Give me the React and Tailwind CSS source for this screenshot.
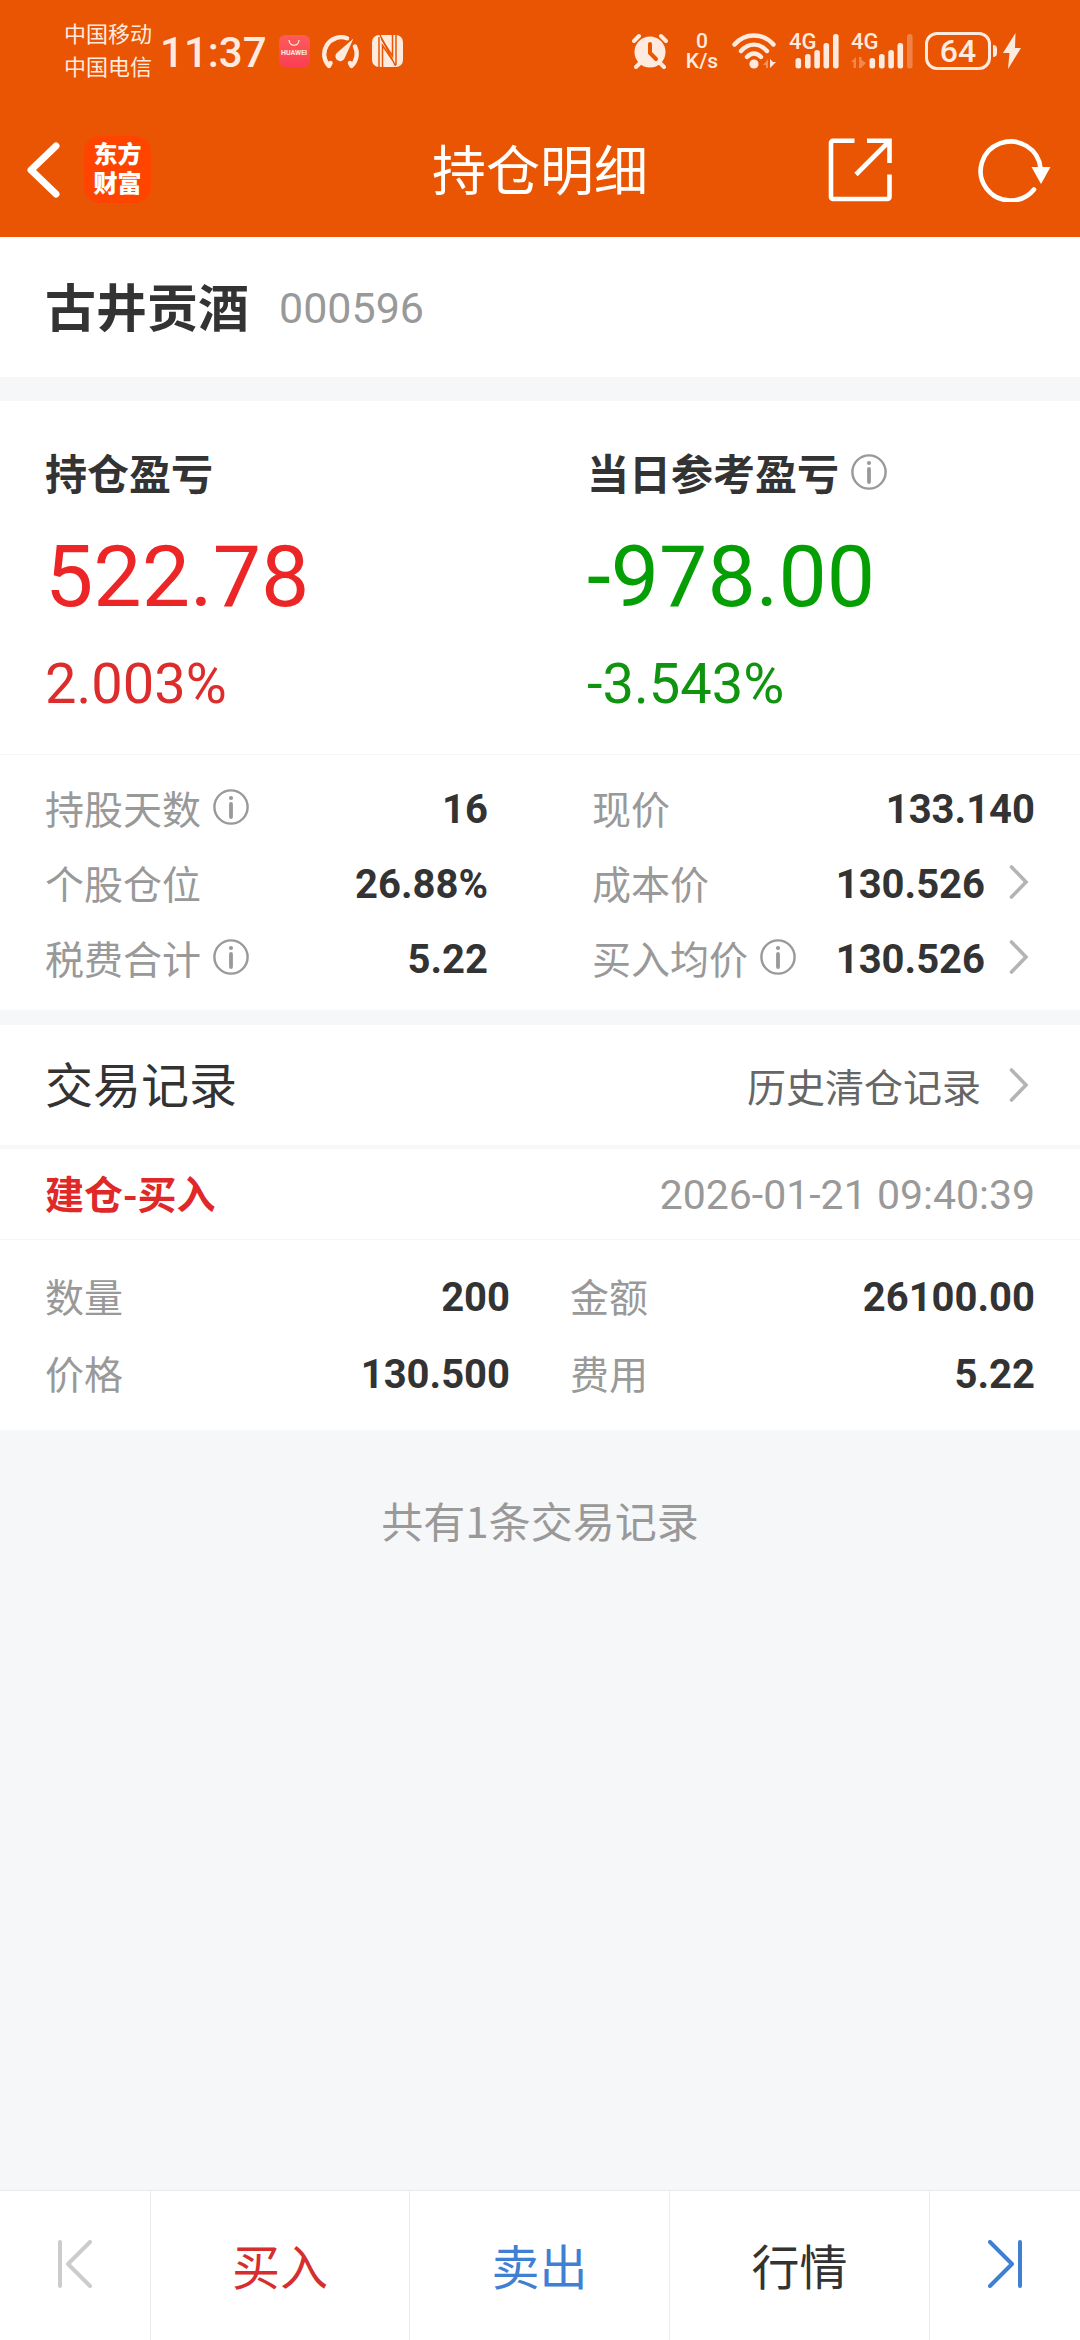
function InfoButton({ label }) {
  return (
    <button type="button" aria-label={`${label}说明`} className="shrink-0">
      <svg className="size-9" viewBox="0 0 36 36" fill="none" stroke="#999999" strokeWidth="2.4">
        <circle cx="18" cy="18" r="16.6" />
        <circle cx="18" cy="9" r="2.1" fill="#999999" stroke="none" />
        <path d="M18 15v13" strokeWidth="3.8" strokeLinecap="round" />
      </svg>
    </button>
  );
}

function Chevron() {
  return (
    <svg className="h-9 w-5 shrink-0" viewBox="0 0 20 36" fill="none" stroke="#b4b4b4" strokeWidth="3.6" strokeLinecap="round">
      <path d="M2.5 3 17 18 2.5 33" />
    </svg>
  );
}

function Signal({ weak }) {
  return (
    <div className={weak ? "relative h-9 w-[62px]" : "relative h-9 w-[50px]"}>
      <span className="absolute top-0 left-0 text-[22px] leading-[18px] font-medium">4G</span>
      <svg className="size-full" viewBox={weak ? "0 0 62 36" : "0 0 50 36"} fill="currentColor">
        {weak && (
          <g opacity="0.35">
            <path d="M0 29 5 24v11H2.5v-6z" />
            <path d="M8 24h2.5v3L15 30l-5 5H8z" />
          </g>
        )}
        <g transform={weak ? "translate(12 0)" : undefined}>
          <rect x="6.500" y="25" width="5.600" height="10.500" rx="2.500" />
          <rect x="16" y="21" width="5.600" height="14.500" rx="2.500" />
          <rect x="25.300" y="17" width="5.600" height="18.500" rx="2.500" />
          <rect x="34.500" y="10" width="5.600" height="25.500" rx="2.500" />
          <rect x="44" y="1" width="5.600" height="34.500" rx="2.500" opacity={weak ? 0.3 : 1} />
        </g>
      </svg>
    </div>
  );
}

function StatusBar() {
  return (
    <div className="flex h-[102px] items-center justify-between pr-[59px] pl-16 font-['Roboto','Noto_Sans_CJK_SC',sans-serif] text-[#ffeadf]">
      <div className="flex items-center">
        <div className="text-[22px] leading-[33px]">
          <p>中国移动</p>
          <p>中国电信</p>
        </div>
        <time className="ml-2 pt-1 text-[42px] leading-[48px] font-medium">11:37</time>
        <div className="ml-3 flex h-8 w-[31px] flex-col items-center rounded-md bg-gradient-to-b from-[#fc5b5b] to-[#fb3d55]">
          <svg className="mt-1 h-2 w-3" viewBox="0 0 12 8" fill="none" stroke="currentColor" strokeWidth="1.200">
            <path d="M1 1c0 7 10 7 10 0" />
          </svg>
          <span className="text-[7px] leading-[12px] font-bold">HUAWEI</span>
        </div>
        <svg className="ml-2.5 h-[35px] w-10" viewBox="0 0 40 35" fill="none" stroke="currentColor" strokeWidth="4.400" strokeLinecap="round" strokeLinejoin="round">
          <path d="M27 4.200A17 17 0 0 0 9 32l1.500-3M35 12.500A17 17 0 0 1 31.500 32L30 29" />
          <path d="M33.500 4.500 24.500 24.500a4.800 4.800 0 1 1-8-5.200z" fill="currentColor" stroke="none" />
        </svg>
        <svg className="ml-3 h-8 w-[31px]" viewBox="0 0 31 32">
          <rect width="31" height="32" rx="7" fill="currentColor" />
          <path d="M7 32V2M24 0v30M8 0 23.500 31" fill="none" stroke="#e95502" strokeWidth="1.500" />
          <path d="M10.500 32V10.500L20.500 25M20.500 0v21L9.500 4" fill="none" stroke="#e95502" strokeWidth="1.500" />
        </svg>
      </div>
      <div className="flex items-center">
        <svg className="size-9" viewBox="0 0 36 36" fill="currentColor">
          <circle cx="18" cy="19" r="15.500" />
          <path d="m8 30-4 4M28 30l4 4M2 8l5-5M34 8l-5-5" stroke="currentColor" strokeWidth="4" strokeLinecap="round" />
          <path d="M18 11v9l6 6" fill="none" stroke="#e95502" strokeWidth="4" strokeLinecap="round" />
        </svg>
        <div className="ml-4 flex w-9 flex-col items-center text-[21px] leading-5 font-medium">
          <span>0</span>
          <span>K/s</span>
        </div>
        <svg className="ml-3 h-9 w-[45px]" viewBox="0 0 45 36" fill="none" stroke="currentColor" strokeWidth="4.400" strokeLinecap="round">
          <path d="M2.500 11.500C13-.5 31-.5 41.500 11.500M9 18c7.500-8.500 18.500-8.500 26 0M15 24c4.500-4.600 9.500-4.600 14 0" />
          <circle cx="22" cy="31" r="4.600" fill="currentColor" stroke="none" />
          <path d="m31 32 5-6v9h-2v-3z" fill="currentColor" stroke="none" opacity="0.400" />
          <path d="M38 26v9l6-6h-3z" fill="currentColor" stroke="none" />
        </svg>
        <div className="ml-3 flex gap-3">
          <Signal />
          <Signal weak />
        </div>
        <div className="ml-3 flex h-[38px] w-[66px] items-center justify-center rounded-xl border-[3px] border-current text-[32px] leading-8 font-medium">
          64
        </div>
        <div className="ml-0.5 h-3 w-1 rounded-r-sm bg-current" />
        <svg className="ml-1.5 h-9 w-[18px]" viewBox="0 0 18 36" fill="currentColor">
          <path d="M12.500 0 0 20h6.500L5 36 18 15h-6z" />
        </svg>
      </div>
    </div>
  );
}

function NavBar() {
  return (
    <div className="grid h-[135px] grid-cols-[1fr_auto_1fr] items-center px-[26px] text-white">
      <div className="flex items-center gap-[22px]">
        <button type="button" aria-label="返回">
          <svg className="h-[58px] w-9" viewBox="0 0 36 58" fill="none" stroke="currentColor" strokeWidth="7" strokeLinecap="round" strokeLinejoin="round">
            <path d="M30 5 5 29l25 24" />
          </svg>
        </button>
        <a href="#home" className="flex size-[67px] flex-col items-center justify-center rounded-2xl bg-[#ff4400] font-['Roboto','Noto_Sans_CJK_SC',sans-serif] text-[24px] leading-[29px] font-black" aria-label="东方财富">
          <span>东方</span>
          <span>财富</span>
        </a>
      </div>
      <h1 className="pb-1 text-[54px] leading-[72px]">持仓明细</h1>
      <div className="flex items-center justify-end gap-[86px] pr-0.5">
        <button type="button" aria-label="分享">
          <svg className="size-16" viewBox="0 0 64 64" fill="none" stroke="currentColor" strokeWidth="4.600">
            <path d="M26.500 2.800H5a2 2 0 0 0-2 2V59a2 2 0 0 0 2 2h54.500a2 2 0 0 0 2-2V36.500" />
            <path d="M39 2.800h22.500V25M61 3.500 28 36.500" />
          </svg>
        </button>
        <button type="button" aria-label="刷新">
          <svg className="h-16 w-[74px]" viewBox="0 0 74 64" fill="none" stroke="currentColor" strokeWidth="4.600">
            <path d="M56 51.500A30 29.500 0 1 1 62.500 30" strokeLinecap="round" />
            <path d="M53.500 29h19L63 46z" fill="currentColor" stroke="none" />
          </svg>
        </button>
      </div>
    </div>
  );
}

function Row({ label, value, info, link }) {
  return (
    <div className="flex h-full items-center justify-between">
      <dt className="flex items-center gap-3 text-[#999999]">
        {label}
        {info && <InfoButton label={label} />}
      </dt>
      <dd className="font-['Roboto',sans-serif] text-[40px] font-bold">
        {link ? (
          <button type="button" className="flex items-center gap-6 pr-1.5">
            <span className="pt-1.5">{value}</span>
            <Chevron />
          </button>
        ) : (
          <span className="block pt-1.5">{value}</span>
        )}
      </dd>
    </div>
  );
}

function Profit({ label, info, amount, rate, amountClass, rateClass }) {
  return (
    <div>
      <h3 className="flex items-center gap-3 text-[42px] leading-[60px] font-bold">
        {label}
        {info && <InfoButton label={label} />}
      </h3>
      <p className={`mt-[27px] font-['Roboto',sans-serif] text-[86px] leading-[96px] ${amountClass}`}>{amount}</p>
      <p className={`mt-[27px] font-['Roboto',sans-serif] text-[56px] leading-[64px] ${rateClass}`}>{rate}</p>
    </div>
  );
}

const stats = [
  { label: "持股天数", value: "16", info: true },
  { label: "现价", value: "133.140" },
  { label: "个股仓位", value: "26.88%" },
  { label: "成本价", value: "130.526", link: true },
  { label: "税费合计", value: "5.22", info: true },
  { label: "买入均价", value: "130.526", info: true, link: true },
];

const trade = [
  { label: "数量", value: "200" },
  { label: "金额", value: "26100.00" },
  { label: "价格", value: "130.500" },
  { label: "费用", value: "5.22" },
];

export default function App() {
  return (
    <div className="flex min-h-screen flex-col bg-[#f6f7f9] font-['Noto_Sans_CJK_SC',sans-serif] text-[#333333]">
      <header className="bg-[#e95502]">
        <StatusBar />
        <NavBar />
      </header>

      <main className="flex-1">
        <section className="flex h-[140px] items-center gap-[30px] bg-white px-[45px] pb-1">
          <h2 className="text-[51px] leading-[68px] font-bold">古井贡酒</h2>
          <span className="pt-1.5 font-['Roboto',sans-serif] text-[43px] leading-[60px] text-[#999999]">000596</span>
        </section>

        <section className="mt-6 bg-white">
          <div className="grid grid-cols-2 gap-x-[94px] border-b border-[#f4f5f6] px-[45px] pt-[41px] pb-[38px]">
            <Profit label="持仓盈亏" amount="522.78" rate="2.003%" amountClass="text-[#ec2626]" rateClass="text-[#dc2c2c]" />
            <Profit label="当日参考盈亏" info amount="-978.00" rate="-3.543%" amountClass="text-[#059f05]" rateClass="text-[#109410]" />
          </div>
          <dl className="grid auto-rows-[75px] grid-cols-2 gap-x-[104px] px-[45px] pt-3.5 pb-4 text-[39px] leading-[56px]">
            {stats.map((item) => (
              <Row key={item.label} {...item} />
            ))}
          </dl>
        </section>

        <section className="mt-[15px] bg-white">
          <div className="flex h-[124px] items-center justify-between border-b-4 border-[#f6f7f9] px-[45px]">
            <h2 className="pb-1.5 text-[48px] leading-[68px]">交易记录</h2>
            <a href="#history" className="flex items-center gap-7 pr-1.5 text-[39px] leading-[56px] text-[#666666]">
              历史清仓记录
              <Chevron />
            </a>
          </div>
          <div className="flex h-[91px] items-center justify-between border-b border-[#f4f5f6] px-[45px] pb-1">
            <h3 className="text-[39px] leading-[56px] font-bold text-[#e02828]">建仓-买入</h3>
            <time className="pt-1.5 font-['Roboto',sans-serif] text-[41px] leading-[56px] text-[#999999]">2026-01-21 09:40:39</time>
          </div>
          <dl className="grid auto-rows-[77px] grid-cols-2 gap-x-[60px] px-[45px] pt-4 pb-5 text-[39px] leading-[56px]">
            {trade.map((item) => (
              <Row key={item.label} {...item} />
            ))}
          </dl>
        </section>

        <p className="pt-[60px] text-center text-[42px] leading-[60px] text-[#999999]">共有1条交易记录</p>
      </main>

      <nav className="grid h-[150px] grid-cols-[151fr_259fr_260fr_260fr_150fr] divide-x divide-[#ebecee] border-t border-[#e8eaec] bg-white text-[48px] leading-[68px]">
        <button type="button" aria-label="上一只" className="flex items-center justify-center pb-1 text-[#cccccc]">
          <svg className="h-12 w-[34px]" viewBox="0 0 34 48" fill="none" stroke="currentColor" strokeWidth="4" strokeLinecap="round" strokeLinejoin="round">
            <path d="M2 2v44M32 2 10 24l22 22" />
          </svg>
        </button>
        <button type="button" className="pb-1 text-[#d62e2e]">买入</button>
        <button type="button" className="pb-1 text-[#3f80d3]">卖出</button>
        <button type="button" className="pb-1">行情</button>
        <button type="button" aria-label="下一只" className="flex items-center justify-center pb-1 text-[#3f80d3]">
          <svg className="h-12 w-[34px]" viewBox="0 0 34 48" fill="none" stroke="currentColor" strokeWidth="4" strokeLinecap="round" strokeLinejoin="round">
            <path d="M32 2v44M2 2l22 22L2 46" />
          </svg>
        </button>
      </nav>
    </div>
  );
}
